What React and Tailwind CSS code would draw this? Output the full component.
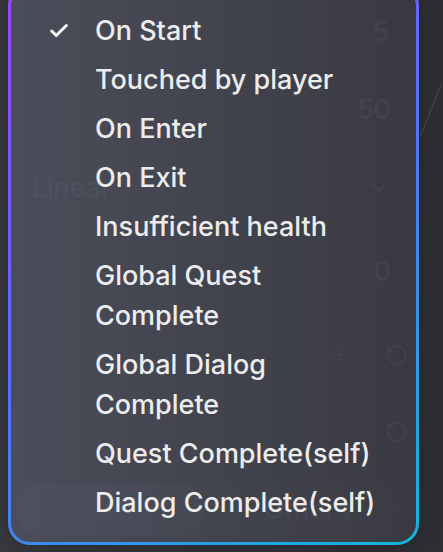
import React from 'react';
import { Check, ChevronDown, Plus, RotateCcw } from 'lucide-react';

const triggers = [
  { id: 'start', label: 'On Start' },
  { id: 'touched', label: 'Touched by player' },
  { id: 'enter', label: 'On Enter' },
  { id: 'exit', label: 'On Exit' },
  { id: 'health', label: 'Insufficient health' },
  { id: 'gquest', label: 'Global Quest Complete' },
  { id: 'gdialog', label: 'Global Dialog Complete' },
  { id: 'quest', label: 'Quest Complete(self)' },
  { id: 'dialog', label: 'Dialog Complete(self)' },
];

const App = () => {
  const selected = 'start';

  return (
    <div
      className="relative h-[552px] w-full overflow-hidden bg-gradient-to-r from-[#393a41] to-[#2e2f34] text-[#76777f]"
      style={{ fontFamily: 'Inter, "Noto Sans", sans-serif' }}
    >
      {/* Page underneath the menu */}
      <div className="flex flex-col text-[27px] font-medium">
        <div className="flex h-[64px] items-center justify-end pr-[54px]">5</div>
        <div className="flex h-[92px] items-center justify-end pr-[52px]">
          <span>50</span>
        </div>
        <div className="flex h-[64px] items-center justify-between pl-[32px] pr-[52px]">
          <span className="font-normal">Linear</span>
          <ChevronDown className="h-6 w-6" />
        </div>
        <div className="flex h-[104px] items-center justify-end pr-[52px]">0</div>
        <div className="flex h-[62px] items-center justify-end gap-[32px] pr-[34px]">
          <Plus className="h-6 w-6" strokeWidth={1.5} />
          <RotateCcw className="h-6 w-6" />
        </div>
        <div className="flex h-[92px] items-center justify-end pr-[34px]">
          <RotateCcw className="h-6 w-6" />
        </div>
        <div className="ml-[15px] mr-[34px] mt-[6px] flex h-[52px] rounded-full bg-[#3b3c43]">
          <div className="flex w-[190px] items-center justify-center rounded-full bg-[#56586c]">Self</div>
          <div className="flex flex-1 items-center justify-center">Others</div>
        </div>
      </div>

      {/* Divider stroke on the right */}
      <div className="absolute left-[430px] top-[84px] h-[54px] w-[1px] rotate-[22deg] bg-[#4a4b52]" />

      {/* Trigger menu */}
      <div className="absolute left-[8px] top-[-16px] h-[561px] w-[411px] rounded-[22px] bg-gradient-to-r from-[#4d4f5d]/[0.9] to-[#3a3b42]/[0.9] pt-[22px] shadow-[0_0_24px_rgba(0,0,0,0.25)]">
        <svg className="pointer-events-none absolute inset-0 h-full w-full" viewBox="0 0 411 561" fill="none">
          <defs>
            <linearGradient id="ring" x1="0" y1="0" x2="411" y2="561" gradientUnits="userSpaceOnUse">
              <stop offset="0" stopColor="#9a47ff" />
              <stop offset="0.45" stopColor="#5a6bff" />
              <stop offset="1" stopColor="#0fb8dc" />
            </linearGradient>
          </defs>
          <rect x="1.5" y="1.5" width="408" height="558" rx="20.5" stroke="url(#ring)" strokeWidth="3" />
        </svg>
        <ul className="relative flex flex-col">
          {triggers.map((t) => (
            <li key={t.id} className="flex items-start pl-[40px] pt-[5px] pb-[4px]">
              <span className="flex h-[40px] w-[47px] items-center">
                {t.id === selected && <Check className="h-[22px] w-[22px] text-white" strokeWidth={3.2} />}
              </span>
              <span className="w-[290px] text-[27px] font-medium leading-[40px] text-[#ececec]">{t.label}</span>
            </li>
          ))}
        </ul>
      </div>
    </div>
  );
};

export default App;
